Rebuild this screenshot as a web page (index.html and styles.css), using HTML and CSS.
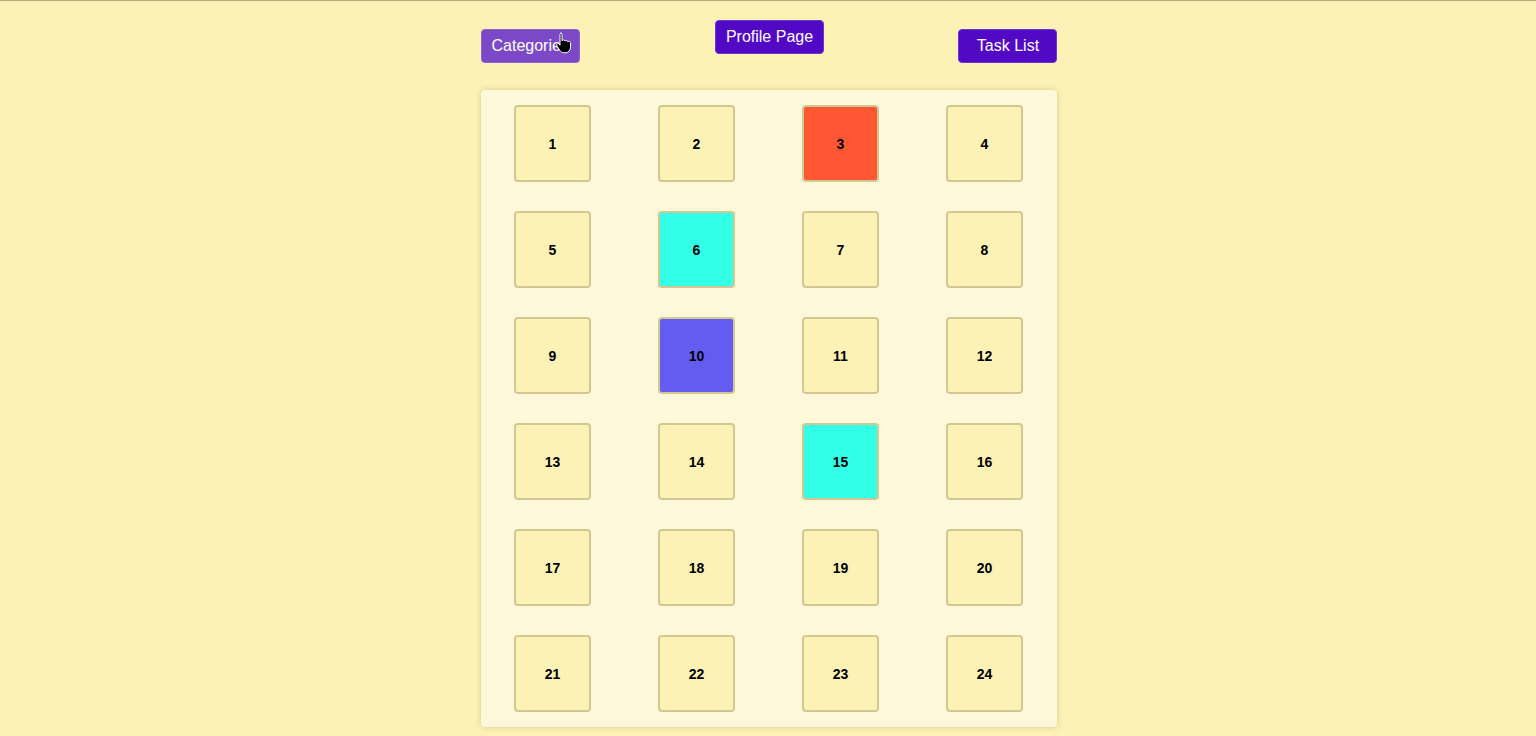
FILE: index.html
```html
<!DOCTYPE html>
<html lang="en">
<head>
<meta charset="utf-8">
<title>Board</title>
<link rel="stylesheet" href="styles.css">
</head>
<body>
<div class="page">
  <header class="topbar">
    <div class="btn-wrap">
      <button class="nav-btn side hover">Categories</button>
      <svg class="cursor" width="16" height="22" viewBox="0 0 16 22" aria-hidden="true">
        <path d="M4.5 1.2c.9 0 1.5.7 1.5 1.5v6.1c.2-.6.8-1 1.5-1 .8 0 1.4.6 1.5 1.3.3-.4.8-.7 1.3-.7.8 0 1.4.6 1.5 1.4.3-.3.7-.5 1.1-.5.9 0 1.6.7 1.6 1.6v4.3c0 3.3-2.2 5.6-5.3 5.6H8c-1.9 0-3.2-.9-4.2-2.4L.9 13.8c-.4-.8-.2-1.6.5-2 .7-.4 1.5-.2 2 .5l.6.9V2.7c0-.8.6-1.5 1.5-1.5z" fill="#000" stroke="#fff" stroke-width="1"/>
      </svg>
    </div>
    <button class="nav-btn center">Profile Page</button>
    <button class="nav-btn side">Task List</button>
  </header>
  <main class="board">
    <div class="cell">1</div>
    <div class="cell">2</div>
    <div class="cell orange">3</div>
    <div class="cell">4</div>
    <div class="cell">5</div>
    <div class="cell cyan">6</div>
    <div class="cell">7</div>
    <div class="cell">8</div>
    <div class="cell">9</div>
    <div class="cell violet">10</div>
    <div class="cell">11</div>
    <div class="cell">12</div>
    <div class="cell">13</div>
    <div class="cell">14</div>
    <div class="cell cyan">15</div>
    <div class="cell">16</div>
    <div class="cell">17</div>
    <div class="cell">18</div>
    <div class="cell">19</div>
    <div class="cell">20</div>
    <div class="cell">21</div>
    <div class="cell">22</div>
    <div class="cell">23</div>
    <div class="cell">24</div>
  </main>
</div>
</body>
</html>
```

FILE: styles.css
```css
html, body {
  margin: 0;
  padding: 0;
}

body {
  background: #fdf2b6;
  border-top: 1px solid #b2aa80;
  font-family: "Liberation Sans", Arial, sans-serif;
  height: 735px;
  overflow: hidden;
}

.page {
  width: 576px;
  margin: 0 auto;
  padding-left: 1px;
}

.topbar {
  display: flex;
  justify-content: space-between;
  align-items: flex-start;
  padding-top: 19px;
}

.btn-wrap {
  position: relative;
  margin-top: 9px;
}

.nav-btn {
  font-family: "Liberation Sans", Arial, sans-serif;
  font-size: 16px;
  line-height: 20px;
  color: #ffffff;
  background: #5209c6;
  border: 1px solid #6a35d2;
  border-radius: 4px;
  padding: 6px 10px;
  height: 34px;
  box-sizing: border-box;
  white-space: nowrap;
  cursor: pointer;
}

.nav-btn.center {
  margin-left: 1px;
}

.nav-btn.side {
  width: 99px;
  margin-top: 9px;
  margin-right: -1px;
}

.btn-wrap .nav-btn.side {
  margin-top: 0;
  margin-right: 0;
}

.nav-btn.hover {
  background: #7b49c8;
  border-color: #8c61d0;
}

.cursor {
  position: absolute;
  left: 75px;
  top: 3px;
}

.board {
  margin-top: 27px;
  width: 576px;
  box-sizing: border-box;
  background: #fdf8da;
  border-radius: 4px;
  box-shadow: 0 0 6px rgba(150, 130, 40, 0.35);
  display: grid;
  grid-template-columns: repeat(4, 144px);
  row-gap: 29px;
  justify-items: center;
  padding: 15px 0 15px;
}

.cell {
  width: 77px;
  height: 77px;
  box-sizing: border-box;
  background: #fdf2b6;
  border: 2px solid #d3c891;
  border-radius: 4px;
  display: flex;
  align-items: center;
  justify-content: center;
  font-weight: bold;
  font-size: 14px;
  color: #000;
}

.cell.orange {
  background: #ff5733;
}

.cell.cyan {
  background: #33ffe7;
}

.cell.violet {
  background: #645cf0;
}
```
